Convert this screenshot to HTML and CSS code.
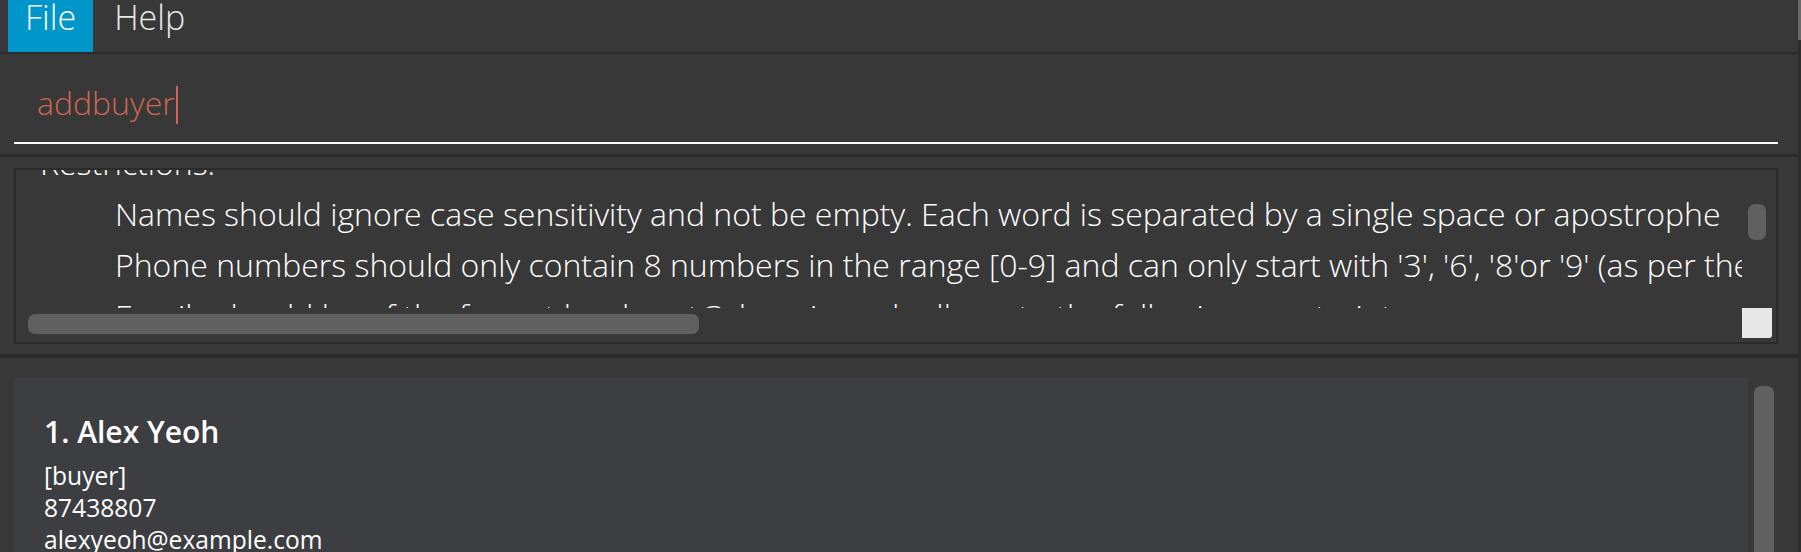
FILE: index.html
```html
<!DOCTYPE html>
<html>
<head>
<meta charset="utf-8">
<link rel="stylesheet" href="styles.css">
</head>
<body>
<div class="app">
  <div class="main">
    <nav class="menubar">
      <span class="menu active">File</span>
      <span class="menu">Help</span>
    </nav>
    <div class="command-pane">
      <div class="command-field">
        <span class="cmd-text">addbuyer</span><span class="caret"></span>
      </div>
    </div>
    <div class="result-pane">
      <div class="result-box">
        <div class="viewport">
          <div class="result-text">
            <div class="line">Restrictions:</div>
            <div class="line indent">Names should ignore case sensitivity and not be empty. Each word is separated by a single space or apostrophe</div>
            <div class="line indent">Phone numbers should only contain 8 numbers in the range [0-9] and can only start with '3', '6', '8'or '9' (as per the Singapore numbering conventions)</div>
            <div class="line indent">Emails should be of the format local-part@domain and adhere to the following constraints:</div>
          </div>
        </div>
        <div class="vbar"><div class="vthumb"></div></div>
        <div class="hbar"><div class="hthumb"></div></div>
        <div class="corner"></div>
      </div>
    </div>
    <div class="list-pane">
      <div class="card">
        <div class="name">1. Alex Yeoh</div>
        <div class="label">[buyer]</div>
        <div class="label">87438807</div>
        <div class="label">alexyeoh@example.com</div>
      </div>
      <div class="list-vbar"><div class="list-thumb"></div></div>
    </div>
  </div>
  <div class="edge"><div class="edge-top"></div></div>
</div>
</body>
</html>
```

FILE: styles.css
```css
html, body {
  margin: 0;
  padding: 0;
  background: #383838;
  overflow: hidden;
}

.app {
  display: flex;
  width: 1801px;
  height: 552px;
  overflow: hidden;
}

.main {
  width: 1798px;
  display: flex;
  flex-direction: column;
  overflow: hidden;
}

.edge {
  width: 3px;
  background: #2d2d2d;
}

.edge-top {
  height: 40px;
  background: #6a6a6a;
}

.menubar {
  flex-shrink: 0;
  height: 54px;
  box-sizing: border-box;
  display: flex;
  padding-left: 8px;
  background: #383838;
  border-bottom: 2px solid #2b2b2b;
}

.menu {
  font-family: "Open Sans", "Noto Sans", sans-serif;
  font-weight: 300;
  font-size: 34px;
  line-height: 34px;
  color: #e8e8e8;
  padding: 0 17px;
  height: 52px;
  box-sizing: border-box;
}

.menu + .menu {
  padding-left: 21px;
}

.menu.active {
  background: #0096c9;
  color: #ffffff;
}

.command-pane {
  flex-shrink: 0;
  height: 103px;
  box-sizing: border-box;
  padding: 0 20px 0 14px;
  border-bottom: 3px solid #2b2b2b;
}

.command-field {
  height: 90px;
  box-sizing: border-box;
  padding: 29px 0 0 23px;
  border-bottom: 2px solid #ffffff;
  display: flex;
  align-items: flex-start;
}

.cmd-text {
  font-family: "Open Sans", "Noto Sans", sans-serif;
  font-weight: 300;
  font-size: 32px;
  line-height: 40px;
  color: #d06651;
}

.caret {
  width: 2px;
  height: 38px;
  margin-top: 3px;
  background: #d06651;
  margin-left: 1px;
}

.result-pane {
  flex-shrink: 0;
  height: 201px;
  box-sizing: border-box;
  padding: 11px 20px 10px 14px;
  border-bottom: 4px solid #2b2b2b;
}

.result-box {
  height: 176px;
  box-sizing: border-box;
  border: 2px solid #2b2b2b;
  padding: 0 4px 4px 0;
  display: grid;
  grid-template-columns: 1fr 30px;
  grid-template-rows: 1fr 30px;
}

.viewport {
  overflow: hidden;
  min-width: 0;
  min-height: 0;
}

.result-text {
  margin-top: -33px;
  padding-left: 24px;
  font-family: "Open Sans", "Noto Sans", sans-serif;
  font-weight: 300;
  font-size: 32px;
  line-height: 51px;
  color: #ffffff;
  white-space: nowrap;
}

.line.indent {
  padding-left: 75px;
}

.vbar {
  padding: 34px 6px 0 6px;
}

.vthumb {
  height: 36px;
  background: #606060;
  border-radius: 7px;
}

.hbar {
  padding: 6px 0 4px 12px;
}

.hthumb {
  width: 671px;
  height: 20px;
  background: #606060;
  border-radius: 7px;
}

.corner {
  background: #e8e8e8;
  border-bottom-right-radius: 3px;
}

.list-pane {
  flex: 1 1 auto;
  min-height: 0;
  overflow: hidden;
  display: flex;
  padding: 20px 24px 0 14px;
}

.card {
  flex: 1;
  background: #3c3e41;
  padding: 34px 30px 0 30px;
}

.name {
  font-family: "Open Sans", "Noto Sans", sans-serif;
  font-weight: 600;
  font-size: 30px;
  line-height: 40px;
  color: #ffffff;
  margin-bottom: 8px;
}

.label {
  font-family: "Open Sans", "Noto Sans", sans-serif;
  font-weight: 400;
  font-size: 24.6px;
  line-height: 32px;
  color: #ffffff;
}

.list-vbar {
  width: 20px;
  margin-left: 6px;
  padding-top: 8px;
}

.list-thumb {
  height: 400px;
  background: #606060;
  border-radius: 7px;
}
```
